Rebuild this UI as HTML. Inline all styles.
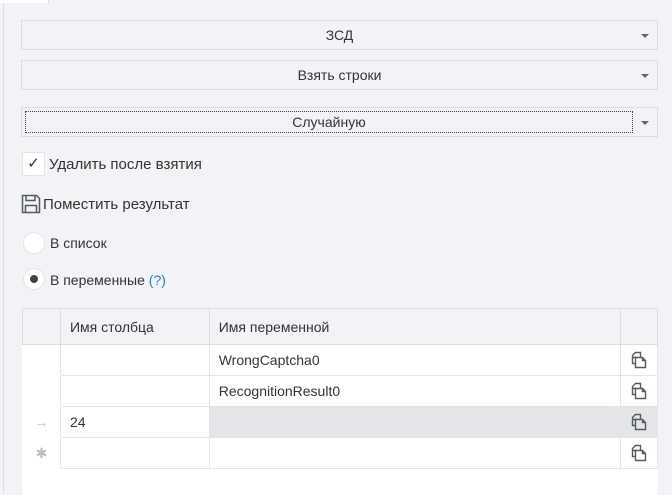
<html><head><style>
body{margin:0;width:672px;height:493px;background:#f2f3f7;font-family:"Liberation Sans",sans-serif;font-size:14px;color:#333;position:relative;overflow:hidden}
.a{position:absolute}
.cb{position:absolute;left:21px;width:635px;height:28px;border:1px solid #dcdde2;background:#f2f3f7;text-align:center;line-height:28px;box-sizing:content-box}
.arr{position:absolute;right:8px;top:13px;width:0;height:0;border-left:4px solid transparent;border-right:4px solid transparent;border-top:4px solid #666}
.rad{position:absolute;left:23px;width:20px;height:20px;border-radius:50%;background:#fff;border:1px solid #e3e4e8}
table{position:absolute;left:22px;top:308px;border-collapse:collapse;background:#fff;width:636px}
td{border:1px solid #e4e5ea;height:31px;padding:0 0 0 9px;font-size:14px;color:#333}
.h td{background:#f2f3f7;height:36px;border-color:#dcdde2}
.ic{padding:0;text-align:center}
.ind{border-color:#fff;border-right-color:#e4e5ea;color:#bbb;text-align:center;padding:0}
</style></head><body>
<div class="a" style="left:3px;top:0;width:1px;height:493px;background:#dcdde2"></div>
<div class="a" style="left:0;top:0;width:48px;height:3px;background:#fff;border-right:1px solid #dcdde2"></div>
<div class="cb" style="top:20px">ЗСД<div class="arr"></div></div>
<div class="cb" style="top:60px">Взять строки<div class="arr"></div></div>
<div class="cb" style="top:107px"><div class="a" style="left:3px;top:3px;width:606px;height:20px;border:1px dotted #444;line-height:20px">Случайную</div><div class="arr"></div></div>
<div class="a" style="left:22px;top:152px;width:21px;height:22px;background:#fff;border:1px solid #e3e4e8;text-align:center;line-height:22px;font-size:15px">✓</div>
<div class="a" style="left:49px;top:156px;font-size:15px">Удалить после взятия</div>
<svg class="a" style="left:21px;top:194px" width="20" height="20" viewBox="0 0 20 20"><path d="M1.5 1.5h14l3 3v14h-17z M5 1.5v5h9v-5 M4.5 18.5v-7h11v7" fill="none" stroke="#555a66" stroke-width="1.5"/></svg>
<div class="a" style="left:43px;top:196px;font-size:15px">Поместить результат</div>
<div class="rad" style="top:232px"></div>
<div class="a" style="left:50px;top:235px">В список</div>
<div class="rad" style="top:268px"><div class="a" style="left:6px;top:6px;width:8px;height:8px;border-radius:50%;background:#444"></div></div>
<div class="a" style="left:50px;top:272px">В переменные <span style="color:#2a7fd4">(?)</span></div>
<table>
<tr class="h"><td style="width:28px"></td><td style="width:139px">Имя столбца</td><td style="width:402px">Имя переменной</td><td style="width:27px"></td></tr>
<tr><td class="ind"></td><td></td><td>WrongCaptcha0</td><td class="ic">CP</td></tr>
<tr><td class="ind"></td><td></td><td>RecognitionResult0</td><td class="ic">CP</td></tr>
<tr><td class="ind">→</td><td>24</td><td style="background:#e4e5e9"></td><td class="ic" style="background:#e4e5e9">CP</td></tr>
<tr><td class="ind">✱</td><td></td><td></td><td class="ic">CP</td></tr>
<tr><td colspan="4" style="border:none;background:#fff;height:26px"></td></tr>
</table>
<script>
document.querySelectorAll('.ic').forEach(function(e){if(e.textContent=='CP')e.innerHTML='<svg width="16" height="18" viewBox="0 0 16 18" style="display:block;margin:auto"><path d="M1.5 4.5l3-3h5v5h-8z M1.5 4.5v8h3 M4.5 6.5v-1 M4.5 6.5h7l3 3v7h-10z M11.5 6.5v3h3" fill="none" stroke="#555a66" stroke-width="1.4"/></svg>';});
</script>
</body></html>
